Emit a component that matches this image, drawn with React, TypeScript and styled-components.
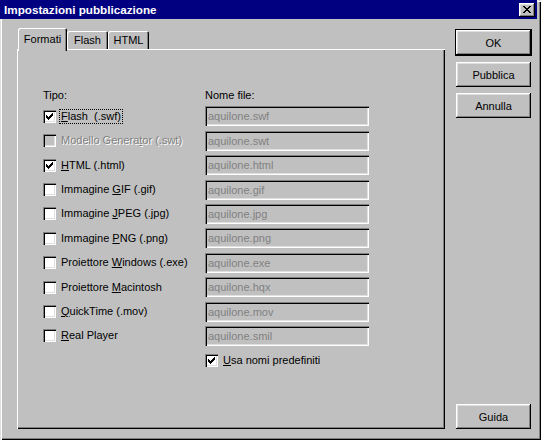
import styled, { createGlobalStyle } from 'styled-components'

const GlobalStyle = createGlobalStyle`
  body {
    margin: 0;
    background: #c0c0c0;
  }
`

const Window = styled.div`
  width: 541px;
  height: 440px;
  box-sizing: border-box;
  display: flex;
  flex-direction: column;
  background: #c0c0c0;
  box-shadow: inset 1px 1px #dfdfdf, inset 2px 2px #fff, inset -1px -1px #000,
    inset -2px -2px #808080;
  font-family: 'Liberation Sans', Arial, sans-serif;
  font-size: 11px;
  color: #000;
`

const TitleBar = styled.div`
  height: 19px;
  margin-right: 4px;
  padding-left: 4px;
  display: flex;
  align-items: center;
  justify-content: space-between;
  background: #000080;
  color: #fff;
  font-weight: 700;
  font-size: 11.7px;
`

const CloseButton = styled.div`
  width: 16px;
  height: 14px;
  margin-right: 2px;
  display: flex;
  align-items: center;
  justify-content: center;
  background: #c0c0c0;
  box-shadow: inset -1px -1px #000, inset 1px 1px #fff, inset -2px -2px #808080,
    inset 2px 2px #dfdfdf;
  svg {
    margin: 0 1px 1px 0;
  }
`

const Body = styled.div`
  flex: 1;
  display: flex;
  padding: 9px 9px 11px 17px;
  min-height: 0;
`

const TabArea = styled.div`
  width: 428px;
  display: flex;
  flex-direction: column;
`

const TabStrip = styled.div`
  height: 21px;
  display: flex;
  align-items: flex-end;
  padding-left: 1px;
`

const Tab = styled.div<{ $active?: boolean; $w: number }>`
  width: ${p => p.$w}px;
  height: ${p => (p.$active ? 23 : 18)}px;
  margin-bottom: ${p => (p.$active ? -2 : 0)}px;
  position: relative;
  z-index: ${p => (p.$active ? 1 : 0)};
  box-sizing: border-box;
  display: flex;
  justify-content: center;
  padding-top: ${p => (p.$active ? 5 : 3)}px;
  background: #c0c0c0;
  border-radius: 2px 2px 0 0;
  box-shadow: inset 1px 1px #fff, inset -1px 0 #000, inset -2px 0 #808080;
`

const Panel = styled.div`
  flex: 1;
  box-sizing: border-box;
  padding: 40px 0 0 26px;
  box-shadow: inset 1px 1px #fff, inset -1px -1px #000, inset -2px -2px #808080;
`

const FormGrid = styled.div`
  display: grid;
  grid-template-columns: 162px 164px;
  grid-template-rows: 13px repeat(11, 20px);
  row-gap: 4.4px;
`

const Caption = styled.div`
  line-height: 13px;
`

const OptionRow = styled.div`
  display: flex;
  align-items: center;
`

const Box = styled.span<{ $disabled?: boolean }>`
  width: 13px;
  height: 13px;
  flex: none;
  box-sizing: border-box;
  background: ${p => (p.$disabled ? '#c0c0c0' : '#fff')};
  box-shadow: inset 1px 1px #808080, inset 2px 2px #000, inset -1px -1px #fff,
    inset -2px -2px #dfdfdf;
  svg {
    display: block;
  }
`

const Label = styled.span<{ $disabled?: boolean; $focus?: boolean }>`
  margin-left: 4px;
  padding: 0 1px;
  line-height: 13px;
  white-space: pre;
  color: ${p => (p.$disabled ? '#808080' : '#000')};
  text-shadow: ${p => (p.$disabled ? '1px 1px 0 #fff' : 'none')};
  outline: ${p => (p.$focus ? '1px dotted #000' : 'none')};
`

const Mnemonic = styled.span`
  text-decoration: underline;
  text-underline-offset: 1px;
`

const FileField = styled.input`
  width: 164px;
  height: 20px;
  box-sizing: border-box;
  margin: 0;
  padding: 0 3px;
  border: none;
  outline: none;
  background: #c0c0c0;
  color: #808080;
  font: inherit;
  box-shadow: inset 1px 1px #808080, inset 2px 2px #000, inset -1px -1px #fff,
    inset -2px -2px #dfdfdf;
`

const ButtonColumn = styled.div`
  width: 77px;
  margin: 1px 0 0 10px;
  display: flex;
  flex-direction: column;
  align-items: center;
  gap: 6px;
`

const Button = styled.button<{ $default?: boolean; $bottom?: boolean }>`
  width: ${p => (p.$default ? 77 : 75)}px;
  height: ${p => (p.$default ? 27 : 25)}px;
  margin: ${p => (p.$bottom ? 'auto 0 0' : '0')};
  box-sizing: border-box;
  padding: 0;
  border: ${p => (p.$default ? '1px solid #000' : 'none')};
  background: #c0c0c0;
  color: #000;
  font-family: 'Liberation Sans', Arial, sans-serif;
  font-size: 11px;
  box-shadow: inset -1px -1px #000, inset 1px 1px #fff, inset -2px -2px #808080,
    inset 2px 2px #dfdfdf;
`

// pixel rows of the classic check glyph: [from, to] per line
const CHECK_ROWS: [number, number][][] = [
  [[9, 9]],
  [[8, 9]],
  [[3, 3], [7, 9]],
  [[3, 4], [6, 8]],
  [[3, 7]],
  [[4, 6]],
  [[5, 5]],
]

function CheckMark() {
  return (
    <svg width="13" height="13" viewBox="0 0 13 13" shapeRendering="crispEdges">
      {CHECK_ROWS.map((runs, i) =>
        runs.map(([a, b]) => (
          <rect key={`${i}-${a}`} x={a} y={3 + i} width={b - a + 1} height={1} fill="#000" />
        )),
      )}
    </svg>
  )
}

function CloseGlyph() {
  return (
    <svg width="8" height="7" viewBox="0 0 8 7" shapeRendering="crispEdges">
      {[0, 1, 2, 3, 4, 5, 6].map(y => {
        const d = y <= 3 ? y : 6 - y
        return (
          <g key={y}>
            <rect x={d} y={y} width={2} height={1} fill="#000" />
            <rect x={6 - d} y={y} width={2} height={1} fill="#000" />
          </g>
        )
      })}
    </svg>
  )
}

interface IOption {
  pre: string
  mn: string
  post: string
  file?: string
  checked?: boolean
  disabled?: boolean
  focus?: boolean
}

const options: IOption[] = [
  { pre: '', mn: 'F', post: 'lash  (.swf)', file: 'aquilone.swf', checked: true, focus: true },
  { pre: 'Modello Genera', mn: 't', post: 'or (.swt)', file: 'aquilone.swt', disabled: true },
  { pre: '', mn: 'H', post: 'TML (.html)', file: 'aquilone.html', checked: true },
  { pre: 'Immagine ', mn: 'G', post: 'IF (.gif)', file: 'aquilone.gif' },
  { pre: 'Immagine ', mn: 'J', post: 'PEG (.jpg)', file: 'aquilone.jpg' },
  { pre: 'Immagine ', mn: 'P', post: 'NG (.png)', file: 'aquilone.png' },
  { pre: 'Proiettore ', mn: 'W', post: 'indows (.exe)', file: 'aquilone.exe' },
  { pre: 'Proiettore ', mn: 'M', post: 'acintosh', file: 'aquilone.hqx' },
  { pre: '', mn: 'Q', post: 'uickTime (.mov)', file: 'aquilone.mov' },
  { pre: '', mn: 'R', post: 'eal Player', file: 'aquilone.smil' },
]

function Option({ pre, mn, post, checked, disabled, focus }: IOption) {
  return (
    <OptionRow>
      <Box $disabled={disabled}>{checked && <CheckMark />}</Box>
      <Label $disabled={disabled} $focus={focus}>
        {pre}
        <Mnemonic>{mn}</Mnemonic>
        {post}
      </Label>
    </OptionRow>
  )
}

function App() {
  return (
    <>
      <GlobalStyle />
      <Window>
        <TitleBar>
          <span>Impostazioni pubblicazione</span>
          <CloseButton>
            <CloseGlyph />
          </CloseButton>
        </TitleBar>
        <Body>
          <TabArea>
            <TabStrip>
              <Tab $active $w={49}>Formati</Tab>
              <Tab $w={41}>Flash</Tab>
              <Tab $w={41}>HTML</Tab>
            </TabStrip>
            <Panel>
              <FormGrid>
                <Caption>Tipo:</Caption>
                <Caption>Nome file:</Caption>
                {options.map(o => [
                  <Option key={o.file + '-opt'} {...o} />,
                  <FileField key={o.file} value={o.file} readOnly tabIndex={-1} />,
                ])}
                <div />
                <Option pre="" mn="U" post="sa nomi predefiniti" checked />
              </FormGrid>
            </Panel>
          </TabArea>
          <ButtonColumn>
            <Button $default>OK</Button>
            <Button>Pubblica</Button>
            <Button>Annulla</Button>
            <Button $bottom>Guida</Button>
          </ButtonColumn>
        </Body>
      </Window>
    </>
  )
}

export default App
